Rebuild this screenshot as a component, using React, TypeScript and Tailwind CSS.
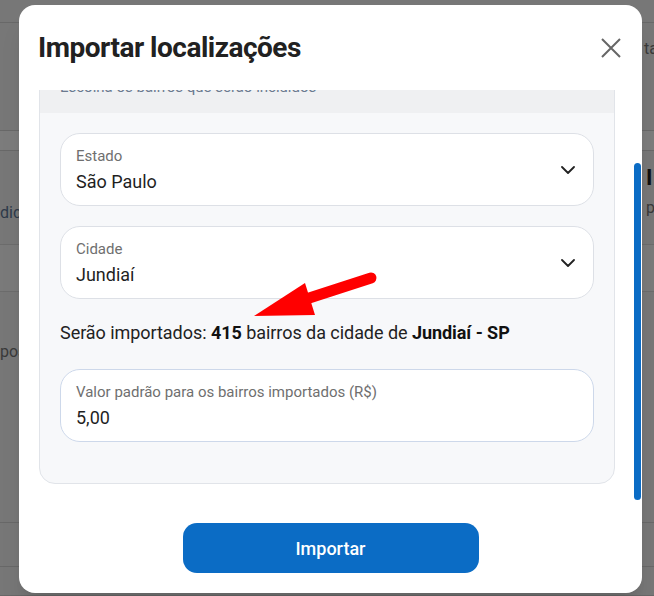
import React from 'react';

const ChevronDown = () => (
  <svg width="14" height="8" viewBox="0 0 14 8" fill="none" stroke="#222" strokeWidth="1.8" strokeLinecap="round" strokeLinejoin="round">
    <path d="M1 1l6 6 6-6" />
  </svg>
);

interface SelectFieldProps {
  label: string;
  value: string;
}

const SelectField: React.FC<SelectFieldProps> = ({ label, value }) => (
  <div className="flex h-[73px] items-center justify-between rounded-[20px] border border-[#dde0e6] bg-white pl-[15px] pr-[18px]">
    <div className="flex flex-col">
      <span className="text-[15px] leading-[20px] text-[#6f6f6f]">{label}</span>
      <span className="mt-[4px] text-[18px] leading-[24px] text-[#1f1f1f]">{value}</span>
    </div>
    <ChevronDown />
  </div>
);

const App: React.FC = () => {
  return (
    <div className="relative h-[596px] w-[654px] overflow-hidden bg-[#777777] font-['Roboto',sans-serif]">
      {/* page behind the overlay */}
      <div className="flex flex-col text-[16px] text-[#2f3440]">
        <div className="h-[23px] border-b border-[#686868]" />
        <div className="flex h-[107px] items-start pl-[644px] pt-[14px]">
          <span className="text-[#3a3a3a]">ta</span>
        </div>
        <div className="h-[21px] border-y border-[#686868] bg-[#7c7c7c]" />
        <div className="flex h-[93px] items-start justify-between pt-[12px]">
          <span className="mt-[38px] text-[#2e3a4a]">dido</span>
          <div className="flex w-[8px] flex-col leading-[30px]">
            <span className="text-[22px] font-bold text-[#111]">I</span>
            <span className="text-[#3a3a3a]">p</span>
          </div>
        </div>
        <div className="h-[48px] border-y border-[#6c6c6c] bg-[#7a7a7a]" />
        <div className="flex h-[230px] items-start pt-[48px]">
          <span className="text-[#3a3a3a]">pos</span>
        </div>
        <div className="h-[45px] border-y border-[#686868]" />
        <div className="h-[29px] border-b border-[#686868]" />
      </div>

      {/* modal overlay */}
      <div className="absolute inset-0 flex justify-center pt-[5px] pl-[7px]">
        <div className="relative flex h-[588px] w-[623px] flex-col rounded-[16px] bg-white shadow-xl">
          <div className="flex h-[85px] shrink-0 items-center justify-between pl-[19px] pr-[21px]">
            <h2 className="text-[28px] font-bold tracking-[-0.5px] text-[#212121]">Importar localizações</h2>
            <button className="text-[#666]">
              <svg width="20" height="20" viewBox="0 0 20 20" stroke="currentColor" strokeWidth="2" fill="none">
                <path d="M1 1l18 18M19 1L1 19" />
              </svg>
            </button>
          </div>

          <div className="flex-1 overflow-hidden px-[20px] pb-[20px]">
            <div className="-mt-[26px] w-[576px] overflow-hidden rounded-[16px] border border-[#e1e4e9] bg-[#f7f8fa]">
              <div className="h-[48px] bg-[#eff0f2] px-[20px] pt-[12px] text-[15px] leading-[20px] text-[#6b7a90]">
                Escolha os bairros que serão incluídos
              </div>
              <div className="flex flex-col px-[20px] pt-[20px] pb-[41px]">
                <SelectField label="Estado" value="São Paulo" />
                <div className="mt-[20px]">
                  <SelectField label="Cidade" value="Jundiaí" />
                </div>
                <p className="mt-[22px] text-[18px] leading-[24px] tracking-[-0.05px] text-[#222]">
                  Serão importados: <b className="font-bold text-[#111]">415</b> bairros da cidade de{' '}
                  <b className="font-bold text-[#111]">Jundiaí - SP</b>
                </p>
                <div className="mt-[24px] flex h-[73px] flex-col justify-center rounded-[20px] border border-[#cdd8ea] bg-white px-[15px]">
                  <span className="text-[15px] leading-[20px] text-[#6f6f6f]">Valor padrão para os bairros importados (R$)</span>
                  <span className="mt-[4px] text-[18px] leading-[24px] text-[#1f1f1f]">5,00</span>
                </div>
              </div>
            </div>
          </div>

          <div className="flex shrink-0 justify-center pb-[20px]">
            <button className="h-[50px] w-[296px] rounded-[14px] bg-[#0b6cc5] text-[18px] font-medium text-white">
              Importar
            </button>
          </div>

          {/* scrollbar thumb */}
          <div className="absolute left-[615px] top-[158px] h-[337px] w-[7px] rounded-full bg-[#0b6cc5]" />
        </div>
      </div>

      {/* red annotation arrow */}
      <svg className="pointer-events-none absolute inset-0" width="654" height="596" viewBox="0 0 654 596">
        <line x1="371" y1="278" x2="300" y2="301" stroke="#ff0000" strokeWidth="11" strokeLinecap="round" />
        <polygon points="254,316 305,283 315,315" fill="#ff0000" />
      </svg>
    </div>
  );
};

export default App;
